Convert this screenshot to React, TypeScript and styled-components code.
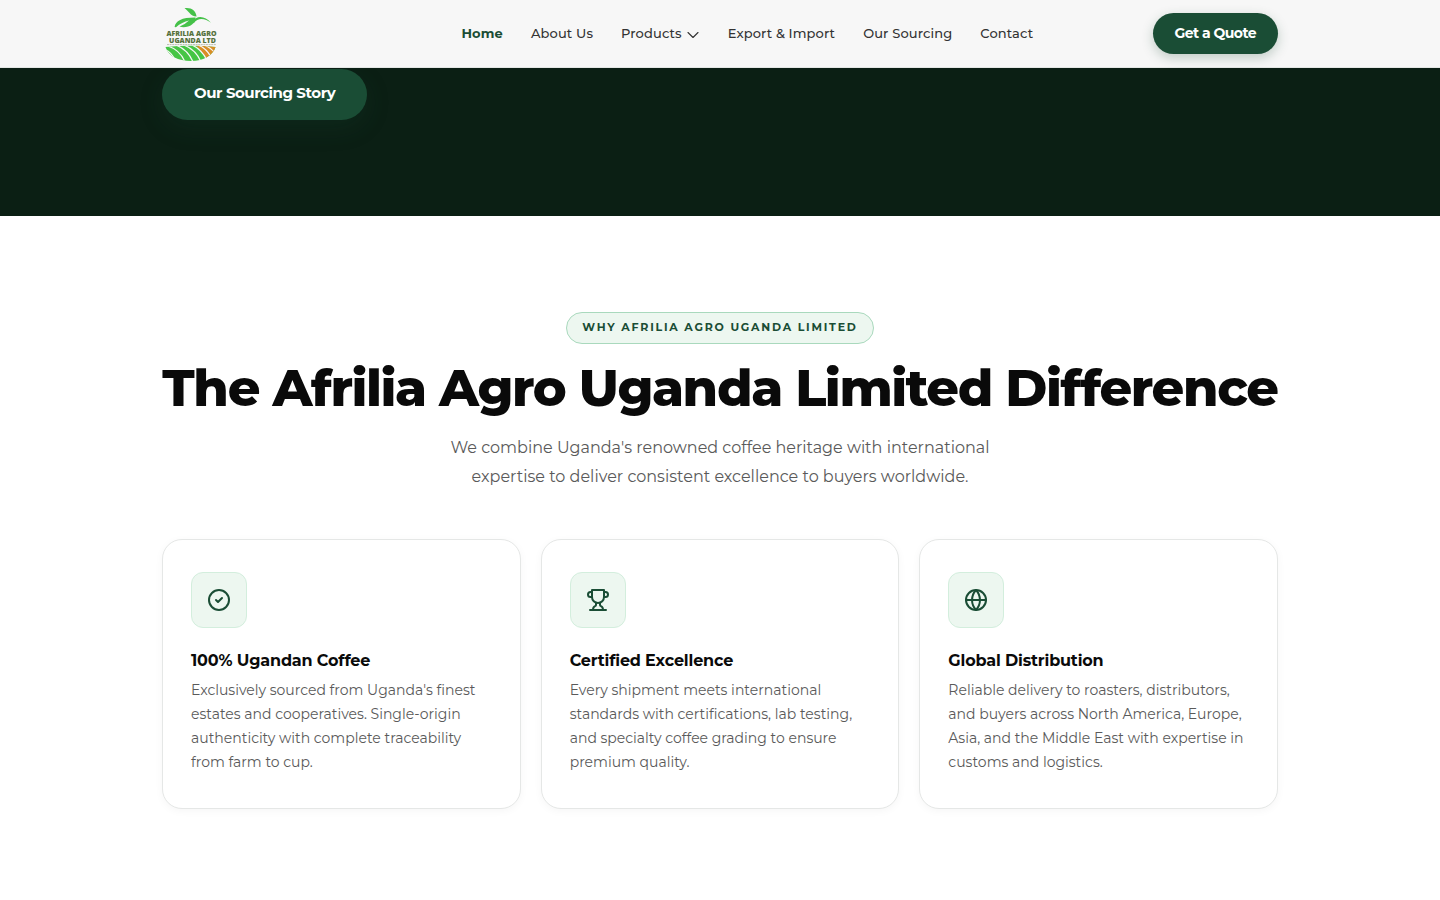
import React from "react";
import styled, { createGlobalStyle } from "styled-components";

const GlobalStyle = createGlobalStyle`
  *, *::before, *::after { box-sizing: border-box; }
  body {
    margin: 0;
    background: #fff;
    color: #0a0a0a;
    font-family: Montserrat, Inter, "Open Sans", sans-serif;
    -webkit-font-smoothing: antialiased;
  }
  h1, h2, h3, p, ul { margin: 0; padding: 0; }
  button { font-family: inherit; cursor: pointer; }
`;

const Container = styled.div`
  width: 100%;
  max-width: 1180px;
  margin: 0 auto;
  padding: 0 32px;
`;

const Header = styled.header`
  position: sticky;
  top: 0;
  z-index: 10;
  background: #f7f7f7;
  border-bottom: 1px solid #e4e7e5;
`;

const HeaderRow = styled(Container)`
  display: flex;
  align-items: center;
  justify-content: space-between;
  height: 67px;
`;

const LogoLink = styled.a`
  display: flex;
  flex: 0 0 180px;
`;

const NavList = styled.ul`
  display: flex;
  align-items: center;
  gap: 28px;
  list-style: none;
`;

const NavLink = styled.a<{ $active?: boolean }>`
  display: flex;
  align-items: center;
  gap: 4px;
  padding-bottom: 2px;
  font-size: 13px;
  line-height: 20px;
  font-weight: ${(p) => (p.$active ? 700 : 500)};
  letter-spacing: 0.01em;
  color: ${(p) => (p.$active ? "#1a4d35" : "#333")};
  text-decoration: none;
  white-space: nowrap;
`;

const PillButton = styled.button<{ $large?: boolean }>`
  border: 0;
  border-radius: 100px;
  background: #1a4d35;
  color: #fff;
  font-weight: 700;
  letter-spacing: ${(p) => (p.$large ? "-0.03em" : "-0.04em")};
  font-size: ${(p) => (p.$large ? 15 : 14)}px;
  line-height: ${(p) => (p.$large ? 19 : 17)}px;
  padding: ${(p) => (p.$large ? "14px 32px 18px" : "12px 22px")};
  white-space: nowrap;
  box-shadow: ${(p) =>
    p.$large ? "0 8px 24px rgba(26, 77, 53, 0.2)" : "0 4px 12px rgba(26, 77, 53, 0.25)"};
`;

const Hero = styled.section`
  background: #0b1f14;
  padding: 1px 0 96px;
`;

const Section = styled.section`
  padding: 96px 0 88px;
`;

const SectionHead = styled.div`
  display: flex;
  flex-direction: column;
  align-items: center;
  text-align: center;
  margin-bottom: 48px;
`;

const Badge = styled.span`
  padding: 7px 15px 9px;
  border: 1px solid #a9d9bd;
  border-radius: 100px;
  background: #edf7f0;
  color: #1a4d35;
  font-size: 11px;
  line-height: 14px;
  font-weight: 700;
  letter-spacing: 0.16em;
  text-transform: uppercase;
`;

const Title = styled.h2`
  margin-top: 16px;
  font-size: 51px;
  line-height: 57px;
  font-weight: 800;
  letter-spacing: -0.028em;
`;

const Lead = styled.p`
  max-width: 560px;
  margin-top: 16px;
  color: #5a5a5a;
  font-size: 16px;
  line-height: 29px;
`;

const Cards = styled.div`
  display: grid;
  grid-template-columns: repeat(3, 1fr);
  gap: 20px;
  @media (max-width: 900px) {
    grid-template-columns: 1fr;
  }
`;

const Card = styled.article`
  padding: 32px 28px;
  border: 1px solid #e5e7e6;
  border-radius: 20px;
  background: #fff;
  box-shadow: 0 2px 8px rgba(0, 0, 0, 0.04);
`;

const IconBox = styled.div`
  display: flex;
  align-items: center;
  justify-content: center;
  width: 56px;
  height: 56px;
  margin-bottom: 20px;
  border: 1px solid #d3eedd;
  border-radius: 12px;
  background: #edf7f0;
  color: #1a4d35;
`;

const CardTitle = styled.h3`
  font-size: 16px;
  line-height: 26px;
  font-weight: 700;
  letter-spacing: -0.01em;
`;

const CardText = styled.p`
  margin-top: 4px;
  padding-bottom: 2px;
  color: #5a5a5a;
  font-size: 14px;
  line-height: 24px;
`;

const Logo = () => (
  <svg width="56" height="56" viewBox="0 0 56 56" role="img" aria-label="Afrilia Agro Uganda Ltd">
    <defs>
      <clipPath id="field">
        <path d="M3.500 41Q29 38.500 53.500 41C51 49 42 55 29 55C16 55 6.500 50 3.500 41Z" />
      </clipPath>
    </defs>
    <path d="M12.600 21C13.500 14.500 20 11.300 33.500 11.400C34 18 25 23 17.500 20.600Q23 18.500 27 14.500Q20 16 14 21.200Z" fill="#45c149" />
    <path d="M22.500 2.200C29 1.200 34 4.400 34.600 10.600C28 10.400 26.500 4.200 22.500 2.200Z" fill="#45c149" />
    <path d="M30 15.500C35 8.800 43 9.600 49 16.800C43 12.200 36 11.200 31.800 17.200Z" fill="#45c149" />
    <g fontFamily="Open Sans, sans-serif" fontWeight="800" fontSize="7" textAnchor="middle" fill="#55703c">
      <text x="29.500" y="29.500">AFRILIA AGRO</text>
      <text x="30.500" y="36.500">UGANDA LTD</text>
    </g>
    <path d="M5 38.600H54" stroke="#a8b09f" strokeWidth="0.800" strokeDasharray="2 0.600" />
    <g clipPath="url(#field)">
      <rect x="2" y="38" width="54" height="18" fill="#46c545" />
      <path d="M33 38Q40 45 46 56H58V38Z" fill="#d98d25" />
      <g fill="none" stroke="#f7f7f7" strokeWidth="1.300">
        <path d="M2 43Q10 46 14 56" />
        <path d="M6 40Q18 44 23 56" />
        <path d="M14 39Q26 44 31 56" />
        <path d="M22 39Q34 44 39 56" />
        <path d="M30 39Q39 43 45 54" />
        <path d="M36 39Q44 42 49 51" />
        <path d="M42 39Q48 41 53 47" />
      </g>
    </g>
  </svg>
);

const Chevron = () => (
  <svg width="14" height="14" viewBox="0 0 14 14" fill="none" stroke="currentColor" strokeWidth="1.100" strokeLinecap="round" strokeLinejoin="round" aria-hidden="true">
    <path d="M2 6.500L7 11.500L12 6.500" />
  </svg>
);

const IconSvg = ({ children }: { children: React.ReactNode }) => (
  <svg width="24" height="24" viewBox="0 0 24 24" fill="none" stroke="currentColor" strokeWidth="2" strokeLinecap="round" strokeLinejoin="round" aria-hidden="true">
    {children}
  </svg>
);

const CheckIcon = () => (
  <IconSvg>
    <circle cx="12" cy="12" r="10" />
    <path d="M9 12l2 2 4-4" />
  </IconSvg>
);

const TrophyIcon = () => (
  <IconSvg>
    <path d="M6 9H4.5a2.5 2.5 0 0 1 0-5H6" />
    <path d="M18 9h1.500a2.500 2.500 0 0 0 0-5H18" />
    <path d="M4 22h16" />
    <path d="M10 14.660V17c0 .550-.470.980-.970 1.210C7.850 18.750 7 20.240 7 22" />
    <path d="M14 14.660V17c0 .550.470.980.970 1.210C16.150 18.750 17 20.240 17 22" />
    <path d="M18 2H6v7a6 6 0 0 0 12 0V2Z" />
  </IconSvg>
);

const GlobeIcon = () => (
  <IconSvg>
    <circle cx="12" cy="12" r="10" />
    <path d="M2 12h20" />
    <path d="M12 2a15.300 15.300 0 0 1 4 10 15.300 15.300 0 0 1-4 10 15.300 15.300 0 0 1-4-10 15.300 15.300 0 0 1 4-10z" />
  </IconSvg>
);

const navItems = [
  { label: "Home", active: true },
  { label: "About Us" },
  { label: "Products", menu: true },
  { label: "Export & Import" },
  { label: "Our Sourcing" },
  { label: "Contact" },
];

const features = [
  {
    icon: <CheckIcon />,
    title: "100% Ugandan Coffee",
    text: "Exclusively sourced from Uganda's finest estates and cooperatives. Single-origin authenticity with complete traceability from farm to cup.",
  },
  {
    icon: <TrophyIcon />,
    title: "Certified Excellence",
    text: "Every shipment meets international standards with certifications, lab testing, and specialty coffee grading to ensure premium quality.",
  },
  {
    icon: <GlobeIcon />,
    title: "Global Distribution",
    text: "Reliable delivery to roasters, distributors, and buyers across North America, Europe, Asia, and the Middle East with expertise in customs and logistics.",
  },
];

export default function App() {
  return (
    <>
      <GlobalStyle />
      <Header>
        <HeaderRow>
          <LogoLink href="#">
            <Logo />
          </LogoLink>
          <nav>
            <NavList>
              {navItems.map((item) => (
                <li key={item.label}>
                  <NavLink href="#" $active={item.active}>
                    {item.label}
                    {item.menu && <Chevron />}
                  </NavLink>
                </li>
              ))}
            </NavList>
          </nav>
          <PillButton type="button">Get a Quote</PillButton>
        </HeaderRow>
      </Header>
      <main>
        <Hero>
          <Container>
            <PillButton type="button" $large>
              Our Sourcing Story
            </PillButton>
          </Container>
        </Hero>
        <Section>
          <Container>
            <SectionHead>
              <Badge>Why Afrilia Agro Uganda Limited</Badge>
              <Title>The Afrilia Agro Uganda Limited Difference</Title>
              <Lead>
                We combine Uganda's renowned coffee heritage with international expertise to deliver
                consistent excellence to buyers worldwide.
              </Lead>
            </SectionHead>
            <Cards>
              {features.map((f) => (
                <Card key={f.title}>
                  <IconBox>{f.icon}</IconBox>
                  <CardTitle>{f.title}</CardTitle>
                  <CardText>{f.text}</CardText>
                </Card>
              ))}
            </Cards>
          </Container>
        </Section>
      </main>
    </>
  );
}
